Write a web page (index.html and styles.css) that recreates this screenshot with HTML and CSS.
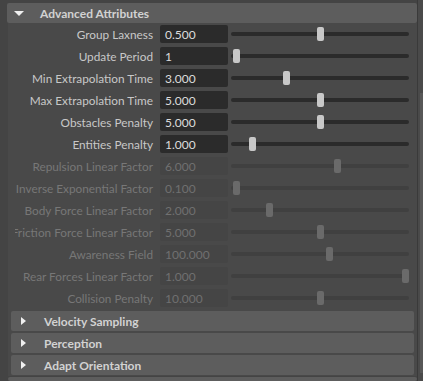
FILE: index.html
```html
<!DOCTYPE html>
<html>
<head lang="en">
    <meta charset="UTF-8">
    <title>Attribute Editor</title>
    <link rel="stylesheet" href="styles.css">
</head>
<body>
<div class="editor">
    <div class="panel">
        <!-- expanded frame -->
        <div class="frame open">
            <div class="frame-head"><span class="arrow down"></span>Advanced Attributes</div>
            <div class="frame-body">
                <div class="row"><label>Group Laxness</label><div class="field">0.500</div><div class="slider"><i style="left:86px"></i></div></div>
                <div class="row"><label>Update Period</label><div class="field">1</div><div class="slider"><i style="left:2px"></i></div></div>
                <div class="row"><label>Min Extrapolation Time</label><div class="field">3.000</div><div class="slider"><i style="left:52px"></i></div></div>
                <div class="row"><label>Max Extrapolation Time</label><div class="field">5.000</div><div class="slider"><i style="left:86px"></i></div></div>
                <div class="row"><label>Obstacles Penalty</label><div class="field">5.000</div><div class="slider"><i style="left:86px"></i></div></div>
                <div class="row"><label>Entities Penalty</label><div class="field">1.000</div><div class="slider"><i style="left:18px"></i></div></div>
                <div class="row off"><label>Repulsion Linear Factor</label><div class="field">6.000</div><div class="slider"><i style="left:103px"></i></div></div>
                <div class="row off"><label>Inverse Exponential Factor</label><div class="field">0.100</div><div class="slider"><i style="left:2px"></i></div></div>
                <div class="row off"><label>Body Force Linear Factor</label><div class="field">2.000</div><div class="slider"><i style="left:35px"></i></div></div>
                <div class="row off"><label>Friction Force Linear Factor</label><div class="field">5.000</div><div class="slider"><i style="left:86px"></i></div></div>
                <div class="row off"><label>Awareness Field</label><div class="field">100.000</div><div class="slider"><i style="left:95px"></i></div></div>
                <div class="row off"><label>Rear Forces Linear Factor</label><div class="field">1.000</div><div class="slider"><i style="left:171px"></i></div></div>
                <div class="row off"><label>Collision Penalty</label><div class="field">10.000</div><div class="slider"><i style="left:86px"></i></div></div>

                <div class="frame-head sub"><span class="arrow right"></span>Velocity Sampling</div>
                <div class="frame-head sub"><span class="arrow right"></span>Perception</div>
                <div class="frame-head sub"><span class="arrow right"></span>Adapt Orientation</div>
            </div>
        </div>
        <div class="frame-head next"></div>
    </div>
    <div class="scrollbar"><div class="thumb"></div></div>
</div>
</body>
</html>
```
FILE: styles.css
```css
*{ margin:0; padding:0; box-sizing:border-box; }
body{ background:#444444; font-family:Lato, "Noto Sans", sans-serif; font-size:12px; color:#c8c8c8; overflow:hidden; }
.editor{ display:flex; height:381px; }
.panel{ flex:1; padding:3px 0 0 7px; display:flex; flex-direction:column; gap:2px; }
.frame-head{ height:20px; background:#5d5d5d; border-radius:2px; display:flex; align-items:center; font-weight:bold; color:#d2d2d2; }
.arrow{ width:33px; display:flex; flex:none; }
.arrow:before{ content:""; display:block; }
.arrow.down:before{ border-left:5.5px solid transparent; border-right:5.5px solid transparent; border-top:5px solid #f0f0f0; margin-left:7px; }
.arrow.right:before{ border-top:4.5px solid transparent; border-bottom:4.5px solid transparent; border-left:5px solid #f0f0f0; margin-left:10px; }
.frame-body{ background:#494949; margin-left:1px; padding:0 3px 1px 3px; display:flex; flex-direction:column; }
.frame-head.sub{ margin-top:2px; }
.frame-head.sub:first-of-type{ margin-top:0; }
.row{ height:22px; display:flex; align-items:center; }
.row label{ width:140px; margin-left:4px; padding-right:2px; display:flex; justify-content:flex-end; white-space:nowrap; overflow:hidden; font-size:11.8px; }
.field{ width:68px; height:18px; margin-left:5px; background:#2b2b2b; border-radius:2px; padding-left:5px; line-height:19px; color:#dcdcdc; }
.slider{ position:relative; width:178px; height:4px; margin-left:3px; background:#2b2b2b; border-radius:2px; }
.slider i{ position:absolute; top:-5px; width:7px; height:14px; background:#c8c8c8; border-radius:2px; }
.row.off label{ color:#777777; }
.row.off .field{ background:#454545; color:#707070; }
.row.off .slider{ background:#404040; }
.row.off .slider i{ background:#6a6a6a; }
.frame-body > .row:last-of-type{ margin-bottom:1px; }
.frame-head.next{ margin-top:-1px; margin-left:1px; }
.scrollbar{ width:6px; background:#4a4a4a; border-left:1px solid #3a3a3a; padding-top:93px; }
.thumb{ height:280px; background:#575757; margin-left:2px; }
```
